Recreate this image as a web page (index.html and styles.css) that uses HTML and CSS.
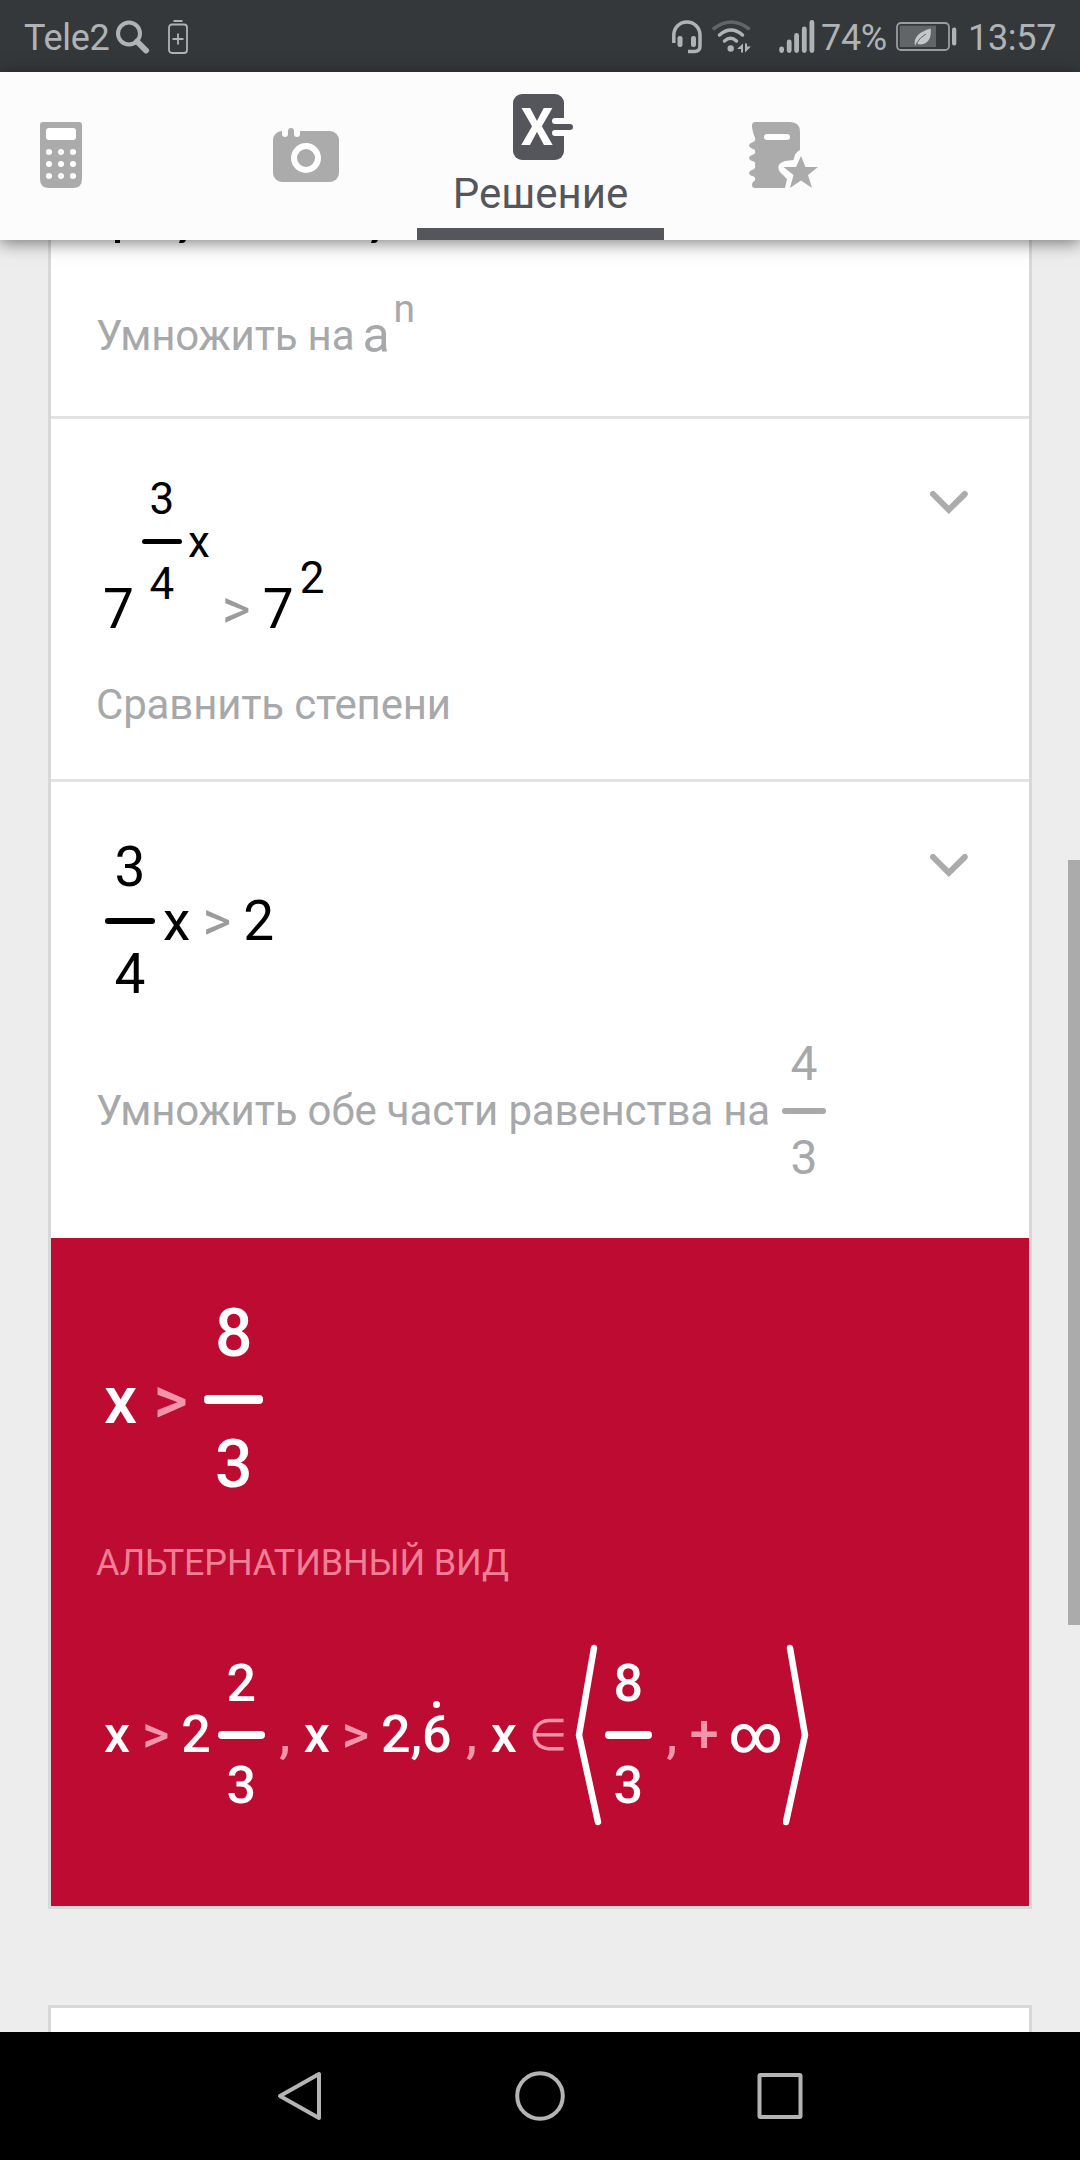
FILE: index.html
```html
<!doctype html>
<html lang="ru">
<head>
  <meta charset="UTF-8" />
  <meta name="viewport" content="width=device-width,initial-scale=1" />
  <title>Решение</title>
  <link rel="stylesheet" href="styles.css">
</head>
<body>
  <header class="status">
    <span class="carrier">Tele2</span>
    <svg class="search" width="34" height="34" viewBox="0 0 34 34"><circle cx="13" cy="13.5" r="11" fill="none" stroke="#b0b3b6" stroke-width="4"/><path d="M21 21.5l9 9" stroke="#b0b3b6" stroke-width="6" stroke-linecap="round"/></svg>
    <svg class="saver" width="20" height="34" viewBox="0 0 20 34" fill="none" stroke="#b0b3b6" stroke-width="1.8"><rect x="1" y="4.5" width="18" height="28.5" rx="3"/><path d="M5.5 1h9M10 13.500v11M4.500 19h11"/></svg>
    <div class="indicators">
      <svg class="phones" width="31" height="34" viewBox="0 0 31 34"><path d="M1.800 23v-8a13 13 0 0 1 26.200 0v11q0 5.500-5.500 5.500H16" fill="none" stroke="#b0b3b6" stroke-width="3.500"/><rect x="5.500" y="16" width="5" height="11" rx="2.200" fill="#b0b3b6"/><rect x="19" y="16" width="5" height="11" rx="2.200" fill="#b0b3b6"/></svg>
      <svg class="wifi" width="40" height="34" viewBox="0 0 40 34"><g fill="none" stroke="#b0b3b6" stroke-width="3.500" stroke-linecap="round"><path stroke="#626568" d="M2 8.500Q19-4.500 36.500 8.500"/><path d="M7.500 15Q19 5 30.500 15"/><path d="M12.500 21Q18.500 15.500 24.500 21"/></g><circle cx="18.700" cy="28.500" r="3.200" fill="#b0b3b6"/><path d="M31 23.500v9h-2v-3.500h-4zM33 23.500h2v3h4l-6 6z" fill="#b0b3b6"/></svg>
      <svg class="signal" width="37" height="34" viewBox="0 0 37 34" stroke="#b0b3b6" stroke-width="4.800" stroke-linecap="round"><path d="M2.600 29v1.500M10.200 22v8.500M17.600 15.500v15M25.300 9v21.500M32.900 2.500v28"/></svg>
      <span class="percent">74%</span>
      <svg class="battery" width="62" height="30" viewBox="0 0 62 30"><rect x="1" y="1" width="52" height="27" rx="4" fill="none" stroke="#9a9da0" stroke-width="1.800"/><rect x="3.700" y="3.700" width="36.300" height="21.300" fill="#626568"/><rect x="56" y="5.500" width="4.300" height="18" rx="2" fill="#b0b3b6"/><path d="M34.700 6.500Q36 21 25 22.500q-3 0-4-1.500l-2 2.500q-1.500-6 3-10.500 4-4 12.700-6.500z" fill="#c4c6c8"/><path d="M20 22q4-7 10-10" fill="none" stroke="#626568"/></svg>
      <span class="clock">13:57</span>
    </div>
  </header>

  <nav class="tabs">
    <div class="tab tab-calc">
      <svg width="42" height="66" viewBox="0 0 42 66"><path d="M3 0h36q3 0 3 3v54q0 9-9 9H9q-9 0-9-9V3q0-3 3-3z" fill="#ababab"/><g fill="#fff"><rect x="6" y="6" width="30" height="12" rx="3"/><circle cx="9" cy="30" r="3"/><circle cx="21" cy="30" r="3"/><circle cx="33" cy="30" r="3"/><circle cx="9" cy="42" r="3"/><circle cx="21" cy="42" r="3"/><circle cx="33" cy="42" r="3"/><circle cx="9" cy="54" r="3"/><circle cx="21" cy="54" r="3"/><circle cx="33" cy="54" r="3"/></g></svg>
    </div>
    <div class="tab tab-camera">
      <svg width="66" height="54" viewBox="0 0 66 54"><rect y="3" width="66" height="51" rx="9" fill="#ababab"/><path d="M9 0h6v6a3 3 0 0 1-6 0zM15 0h6v3h-6zM21 0h6v6a3 3 0 0 1-6 0z" fill="#fcfcfc"/><path d="M15 9V3a3 3 0 0 1 6 0v6z" fill="#ababab"/><circle cx="33" cy="30" r="12" fill="none" stroke="#fff" stroke-width="6"/></svg>
    </div>
    <div class="tab tab-solution active">
      <svg width="60" height="66" viewBox="0 0 60 66"><rect width="51" height="66" rx="9" fill="#55565b"/><path d="M52 24H42a3 3 0 0 0 0 6h10zM52 36H42a3 3 0 0 0 0 6h10z" fill="#fcfcfc"/><path d="M40 33h17" stroke="#55565b" stroke-width="6" stroke-linecap="round"/><text class="logo-x" x="24" y="51" text-anchor="middle">X</text></svg>
      <span class="tab-label">Решение</span>
    </div>
    <div class="tab tab-book">
      <svg width="70" height="66" viewBox="0 0 70 66"><path d="M6 0h35q10 0 10 10v18q-5 2-6.500 10L36 39q-10 3-5 11l7 7-2 9H6q-3 0-3-3 0-3 3-4.500 1-4-3-4.500-3-1-3-3t3-3q4-1 3-4.500 1-4-3-4.500-3-1-3-3t3-3q4-1 3-3.500 1-2-3-3-3-1-3-3t3-3q4-1 3-4.500Q3 8 3 4q0-4 3-4z" fill="#ababab"/><path d="M18 15h20" stroke="#fff" stroke-width="6" stroke-linecap="round"/><path d="M52 34l4.500 11H69l-10 8 4 13-11-7.500L41 66l3.500-13-10-8H47z" fill="#ababab"/></svg>
    </div>
  </nav>

  <main class="content">
    <section class="card">
      <div class="step step-cut">
        <!-- tails of the heading scrolled under the tab bar -->
        <svg class="cut-heading" width="290" height="3" viewBox="0 0 290 3"><path d="M16 0h5v3h-5zM81 0h6q-1 3-4 3h-3zM273 0h6q-1 3-4 3h-3z"/></svg>
        <div class="hint">
          <span>Умножить на</span><span class="base">a</span><span class="power">n</span>
        </div>
      </div>

      <div class="step step-compare">
        <svg class="chevron" width="38" height="23" viewBox="0 0 38 23"><path d="M3 3l15.800 15.800L34.800 3"/></svg>
        <div class="math math-power">
          <span>7</span>
          <span class="exp">
            <span class="frac"><span>3</span><i class="bar"></i><span>4</span></span>
            <span class="var">x</span>
          </span>
          <span class="op">&gt;</span>
          <span>7</span>
          <span class="exp exp-short">2</span>
        </div>
        <div class="hint">Сравнить степени</div>
      </div>

      <div class="step step-multiply">
        <svg class="chevron" width="38" height="23" viewBox="0 0 38 23"><path d="M3 3l15.800 15.800L34.800 3"/></svg>
        <div class="math">
          <span class="frac"><span>3</span><i class="bar"></i><span>4</span></span>
          <span class="var">x</span>
          <span class="op">&gt;</span>
          <span>2</span>
        </div>
        <div class="hint hint-frac">
          <span>Умножить обе части равенства на</span>
          <span class="frac"><span>4</span><i class="bar"></i><span>3</span></span>
        </div>
      </div>

      <div class="result">
        <div class="math answer">
          <span class="var">x</span>
          <span class="op">&gt;</span>
          <span class="frac"><span>8</span><i class="bar"></i><span>3</span></span>
        </div>
        <div class="alt-title">АЛЬТЕРНАТИВНЫЙ ВИД</div>
        <div class="math alt">
          <span class="var">x</span>
          <span class="op">&gt;</span>
          <span class="num">2</span>
          <span class="frac"><span>2</span><i class="bar"></i><span>3</span></span>
          <span class="comma">,</span>
          <span class="var">x</span>
          <span class="op">&gt;</span>
          <span class="num">2,<span class="period">6</span></span>
          <span class="comma">,</span>
          <span class="var">x</span>
          <span class="op in">∈</span>
          <svg class="angle" width="28" height="186" viewBox="0 0 28 186"><path d="M20 6L5 93l19 87"/></svg>
          <span class="frac"><span>8</span><i class="bar"></i><span>3</span></span>
          <span class="comma">,</span>
          <span class="op plus">+</span>
          <span class="inf">∞</span>
          <svg class="angle" width="28" height="186" viewBox="0 0 28 186"><path d="M7 6l15 87-19 87"/></svg>
        </div>
      </div>
    </section>

    <section class="card next"></section>
    <div class="scrollbar"></div>
  </main>

  <footer class="navbar">
    <svg width="50" height="52" viewBox="0 0 50 52"><path d="M44 4v44L5 26z"/></svg>
    <svg width="50" height="52" viewBox="0 0 50 52"><circle cx="25" cy="26" r="22.800"/></svg>
    <svg width="50" height="52" viewBox="0 0 50 52"><rect x="4.500" y="5" width="41" height="42" rx="1"/></svg>
  </footer>
</body>
</html>
```

FILE: styles.css
```css
:root { --red:#be0b31; --pink:#f494aa; --hint:#a7a8aa; --dark:#55565b; --status:#b0b3b6; }
*{ box-sizing:border-box; }
body{
  margin:0; height:2160px;
  display:flex; flex-direction:column;
  background:#ededed;
  font-family: Roboto, "Liberation Sans", sans-serif;
  overflow:hidden;
}
svg{ display:block; flex:none; }

.status{
  height:72px; flex:none;
  display:flex; align-items:center;
  padding: 2px 24px 0;
  background:#35383b;
  color: var(--status);
  font-size:36px;
  line-height:1;
  letter-spacing:-.3px;
}
.status span{ padding-top:2px; }
.carrier{ width:92px; }
.saver{ margin-left:18px; }
.indicators{ display:flex; align-items:center; margin-left:auto; }
.wifi{ margin-left:9px; }
.signal{ margin-left:27px; }
.percent{ width:75px; margin-left:5px; }
.battery{ margin-left:0; }
.clock{ width:88px; margin-left:10px; }

.tabs{
  height:168px; flex:none;
  display:flex;
  background:#fcfcfc;
  box-shadow: 0 3px 16px rgba(0,0,0,.5);
  position:relative;
  z-index:1;
}
.tab{ display:flex; flex-direction:column; align-items:center; padding-top:50px; }
.tab-calc{ width:195px; align-items:flex-start; padding-left:40px; }
.tab-camera{ width:222px; padding-top:56px; }
.tab-solution{ width:247px; padding-top:22px; border-bottom:12px solid var(--dark); }
.tab-solution svg{ margin-left:4px; }
.tab-book{ width:240px; }
.tab-label{ margin-top:13px; font-size:42px; line-height:1; color:var(--dark); }
.logo-x{ font-size:51px; font-weight:700; fill:#fff; }

.content{ flex:1; min-height:0; padding:0 48px; position:relative; overflow:hidden; }
.card{ background:#fff; border:3px solid #d8d8d8; }
.card:first-child{ border-top:0; }
.next{ height:200px; margin-top:96px; }

.step{ border-bottom:3px solid #e3e3e3; position:relative; }
.step-cut{ height:179px; }
.step-compare{ height:363px; padding-top:58px; }
.step-multiply{ height:456px; padding-top:58px; border-bottom:0; }
.cut-heading{ margin-left:48px; }
.chevron{ position:absolute; left:879px; top:72px; fill:none; stroke:#ababab; stroke-width:6; stroke-linecap:round; }

.hint{
  display:flex;
  padding-left:45px;
  font-size:42px;
  line-height:1;
  letter-spacing:-.16px;
  color:var(--hint);
  white-space:nowrap;
}
.step-cut .hint{ align-items:flex-end; margin-top:45px; height:72px; padding-bottom:3px; }
.base{ font-size:50px; margin:0 0 -3px 8px; }
.power{ font-size:39px; margin:0 0 28px 4px; }
.step-compare .hint{ margin-top:47px; }
.hint-frac{ align-items:center; margin-top:38px; }
.hint-frac .frac{ font-size:48px; width:44px; gap:20px; margin-left:12px; }
.hint-frac .bar{ height:6px; }

/* formulas */
.math{
  display:flex; align-items:center;
  padding-left:51px;
  font-size:55px;
  line-height:1;
  color:#000;
}
.frac{ display:flex; flex-direction:column; align-items:center; width:50px; gap:23px; }
.bar{ width:100%; height:6px; border-radius:3px; background:currentColor; }
.op{ width:29px; text-align:center; color:#9b9b9b; }
.math > .frac:first-child{ margin-left:3px; }
.var{ margin-left:8px; }
.math .op{ margin:0 12px 0 12px; }

.math-power{ align-items:flex-end; padding-left:52px; }
.exp{ display:flex; align-items:center; font-size:44px; margin:0 0 31px 8px; }
.exp .frac{ width:40px; gap:18px; }
.exp .bar{ height:5px; }
.exp .var{ margin-left:6px; }
.exp-short{ margin:0 0 37px 6px; }

.result{ height:668px; padding-top:63px; background:var(--red); color:#fff; }
.result .math{ color:#fff; font-weight:500; }
.result .op, .comma{ color:var(--pink); }
.answer{ font-size:66px; padding-left:53px; }
.answer .var{ margin:2px 0 0; }
.answer .op{ width:35px; margin:2px 16px 0; }
.answer .frac{ width:59px; gap:28px; }
.answer .bar{ height:9px; border-radius:4px; }
.alt-title{ margin:47px 0 0 45px; font-size:36px; line-height:1; letter-spacing:-.15px; color:#ee7f97; }
.alt{ font-size:52px; padding-left:53px; margin-top:61px; }
.alt .var{ margin-left:0; }
.alt .op{ width:27px; margin:0 12px; }
.alt .frac{ width:47px; gap:21px; margin-left:7px; }
.alt .bar{ height:8px; border-radius:4px; }
.comma{ width:12px; text-align:center; margin:0 13px 0 14px; }
.period{ position:relative; }
.period::after{
  content:"";
  position:absolute; left:11px; top:-3px;
  width:7px; height:7px;
  border-radius:50%;
  background:#fff;
}
.alt .in{ width:33px; margin:0 12px; font-family:"DejaVu Sans", sans-serif; font-size:44px; font-weight:400; }
.angle{ fill:none; stroke:#fff; stroke-width:6.5; stroke-linecap:round; stroke-linejoin:round; }
.alt .angle + .frac{ margin-left:3px; }
.alt .plus{ margin:0 12px 0 -1px; }
.inf{ width:54px; text-align:center; }

.scrollbar{ position:absolute; right:0; top:620px; width:12px; height:765px; background:#ababab; }

.navbar{
  height:128px; flex:none;
  display:flex; justify-content:space-between; align-items:center;
  padding:0 275px;
  background:#000;
}
.navbar svg{ fill:none; stroke:#b4b4b4; stroke-width:4; stroke-linejoin:round; }
```
